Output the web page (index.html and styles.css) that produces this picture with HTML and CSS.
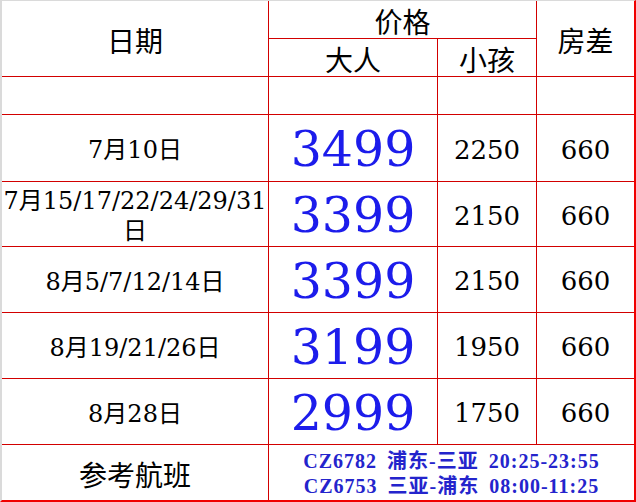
FILE: index.html
```html
<!DOCTYPE html>
<html lang="zh-CN">
<head>
<meta charset="utf-8">
<title>价格表</title>
<link rel="stylesheet" href="styles.css">
</head>
<body>
<div class="sheet">
  <div class="cell head span-r2 hd-main">日期</div>
  <div class="cell head span-c2 hd-top">价格</div>
  <div class="cell head span-r2 hd-main last">房差</div>
  <div class="cell head hd-sub">大人</div>
  <div class="cell head hd-sub">小孩</div>

  <div class="cell"></div>
  <div class="cell"></div>
  <div class="cell"></div>
  <div class="cell last"></div>

  <div class="cell date">7月10日</div>
  <div class="cell price">3499</div>
  <div class="cell num">2250</div>
  <div class="cell num last">660</div>

  <div class="cell date">7月15/17/22/24/29/31<br>日</div>
  <div class="cell price">3399</div>
  <div class="cell num">2150</div>
  <div class="cell num last">660</div>

  <div class="cell date">8月5/7/12/14日</div>
  <div class="cell price">3399</div>
  <div class="cell num">2150</div>
  <div class="cell num last">660</div>

  <div class="cell date">8月19/21/26日</div>
  <div class="cell price">3199</div>
  <div class="cell num">1950</div>
  <div class="cell num last">660</div>

  <div class="cell date">8月28日</div>
  <div class="cell price">2999</div>
  <div class="cell num">1750</div>
  <div class="cell num last">660</div>

  <div class="cell head hd-main bottom">参考航班</div>
  <div class="cell flight span-c3 last bottom">
    <div class="flight-line">CZ6782 浦东-三亚 20:25-23:55</div>
    <div class="flight-line">CZ6753 三亚-浦东 08:00-11:25</div>
  </div>
</div>
</body>
</html>
```

FILE: styles.css
```css
html, body {
  margin: 0;
  padding: 0;
  background: #ffffff;
}

body {
  font-family: "DejaVu Serif", "Noto Sans CJK SC", serif;
  color: #000000;
}

.sheet {
  display: grid;
  width: fit-content;
  grid-template-columns: 267px 169px 99px 97px;
  grid-template-rows: 38px 38px 38px 67px 65px 66px 66px 66px 55px;
  border-left: 2px solid #dadada;
  border-top: 1px solid #dadada;
  border-right: 2px solid #f00000;
  border-bottom: 2px solid #f00000;
  background: #ffffff;
}

.cell {
  box-sizing: border-box;
  border-right: 1px solid #d20000;
  border-bottom: 1px solid #d20000;
  display: flex;
  flex-direction: column;
  align-items: center;
  justify-content: center;
  text-align: center;
}

.last { border-right: none; }
.bottom { border-bottom: none; }

.span-r2 { grid-row: span 2; }
.span-c2 { grid-column: span 2; }
.span-c3 { grid-column: span 3; }

.head {
  font-family: "Noto Sans CJK SC", sans-serif;
  font-size: 28px;
  line-height: 32px;
}

.hd-main { padding-top: 3px; }
.hd-top { padding-top: 2px; }
.hd-sub { padding-top: 3px; }

.date {
  font-size: 24px;
  line-height: 30px;
  padding-top: 4px;
  white-space: nowrap;
}

.price {
  font-size: 49px;
  line-height: 60px;
  color: #1c1ceb;
  padding-top: 4px;
}

.num {
  font-size: 26px;
  line-height: 34px;
  padding-top: 3px;
}

.flight {
  font-family: "Liberation Serif", "Noto Sans CJK SC", serif;
  color: #2424cc;
  font-size: 20px;
  font-weight: bold;
  line-height: 25px;
  letter-spacing: 1px;
  word-spacing: 4px;
  padding-top: 2px;
}

.flight-line {
  white-space: nowrap;
}
```
